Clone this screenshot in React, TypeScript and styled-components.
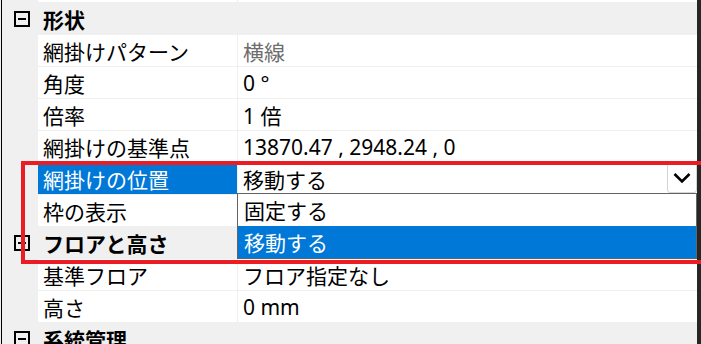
import styled, { createGlobalStyle } from "styled-components";

const GlobalStyle = createGlobalStyle`
  html, body {
    margin: 0;
    padding: 0;
    background: #f0f0f0;
  }
  body {
    font-family: "Noto Sans", "Noto Sans CJK JP", sans-serif;
  }
`;

const Page = styled.div`
  position: relative;
  width: 701px;
  height: 344px;
  overflow: hidden;
  display: flex;
  flex-direction: column;
  background: #f0f0f0;
`;

const Grid = styled.div`
  margin: -29px 0 0 1px;
  width: 696px;
  border-left: 1px solid #000;
  border-right: 4px solid #262626;
  box-sizing: border-box;
  width: 700px;
  display: flex;
  flex-direction: column;
  font-size: 21px;
  color: #000;
`;

const Row = styled.div`
  display: flex;
  height: 32px;
  flex-shrink: 0;
`;

const CatRow = styled(Row)`
  background: #f0f0f0;
  align-items: center;
  font-weight: 700;
  font-family: "Noto Sans CJK JP", sans-serif;
`;

const Gutter = styled.div`
  width: 36px;
  flex-shrink: 0;
  display: flex;
  align-items: center;
  justify-content: center;
`;

const ToggleBox = styled.span`
  width: 16px;
  height: 16px;
  box-sizing: border-box;
  border: 2px solid #000;
  display: flex;
  align-items: center;
  justify-content: center;
  margin-left: 4px;
  &::after {
    content: "";
    width: 8px;
    height: 2px;
    background: #000;
  }
`;

const CatLabel = styled.span`
  padding-left: 5px;
`;

const Cell = styled.div`
  display: flex;
  align-items: center;
  box-sizing: border-box;
  border-bottom: 1px solid #f0f0f0;
  padding-left: 5px;
  white-space: nowrap;
  font-family: "Noto Sans", "Noto Sans CJK JP", sans-serif;
`;

const NameCell = styled(Cell)<{ $active?: boolean }>`
  width: 200px;
  flex-shrink: 0;
  border-right: 1px solid #f0f0f0;
  background: ${(p) => (p.$active ? "#0078d7" : "#fff")};
  color: ${(p) => (p.$active ? "#fff" : "#000")};
  background-clip: padding-box;
`;

const ValueCell = styled(Cell)<{ $muted?: boolean }>`
  flex: 1;
  position: relative;
  background: #fff;
  color: ${(p) => (p.$muted ? "#6d6d6d" : "#000")};
`;

const DropButton = styled.div`
  position: absolute;
  top: -1px;
  right: 0;
  width: 30px;
  height: 31px;
  box-sizing: border-box;
  border: 1px solid #d4d4d4;
  border-radius: 0 0 3px 3px;
  background: #fff;
  display: flex;
  align-items: center;
  justify-content: center;
`;

const DropList = styled.div`
  position: absolute;
  top: 30px;
  left: -1px;
  right: 0;
  border: 1px solid #646464;
  background: #fff;
  z-index: 2;
`;

const Option = styled.div<{ $selected?: boolean }>`
  height: 32px;
  display: flex;
  align-items: center;
  padding-left: 6px;
  background: ${(p) => (p.$selected ? "#0078d7" : "#fff")};
  color: ${(p) => (p.$selected ? "#fff" : "#000")};
`;

const Annotation = styled.div`
  position: absolute;
  left: 21px;
  top: 161px;
  width: 700px;
  height: 103px;
  box-sizing: border-box;
  border: 4px solid #ec1c24;
  pointer-events: none;
  z-index: 3;
`;

type Item =
  | { kind: "cat"; label: string }
  | { kind: "prop"; name: string; value: string; muted?: boolean }
  | { kind: "combo"; name: string; value: string; options: string[] };

const items: Item[] = [
  { kind: "prop", name: "", value: "" },
  { kind: "cat", label: "形状" },
  { kind: "prop", name: "網掛けパターン", value: "横線", muted: true },
  { kind: "prop", name: "角度", value: "0 °" },
  { kind: "prop", name: "倍率", value: "1 倍" },
  { kind: "prop", name: "網掛けの基準点", value: "13870.47 , 2948.24 , 0" },
  { kind: "combo", name: "網掛けの位置", value: "移動する", options: ["固定する", "移動する"] },
  { kind: "prop", name: "枠の表示", value: "" },
  { kind: "cat", label: "フロアと高さ" },
  { kind: "prop", name: "基準フロア", value: "フロア指定なし" },
  { kind: "prop", name: "高さ", value: "0 mm" },
  { kind: "cat", label: "系統管理" },
];

const Chevron = () => (
  <svg width="18" height="12" viewBox="0 0 18 12">
    <polyline points="1.5,2 9,9.5 16.5,2" fill="none" stroke="#000" strokeWidth="2.6" />
  </svg>
);

const App = () => {
  return (
    <Page>
      <GlobalStyle />
      <Grid>
        {items.map((it, i) => {
          if (it.kind === "cat") {
            return (
              <CatRow key={i}>
                <Gutter>
                  <ToggleBox />
                </Gutter>
                <CatLabel>{it.label}</CatLabel>
              </CatRow>
            );
          }
          if (it.kind === "combo") {
            return (
              <Row key={i} style={{ position: "relative", zIndex: 2 }}>
                <Gutter />
                <NameCell $active>{it.name}</NameCell>
                <ValueCell>
                  {it.value}
                  <DropButton>
                    <Chevron />
                  </DropButton>
                  <DropList>
                    {it.options.map((o) => (
                      <Option key={o} $selected={o === it.value}>
                        {o}
                      </Option>
                    ))}
                  </DropList>
                </ValueCell>
              </Row>
            );
          }
          return (
            <Row key={i}>
              <Gutter />
              <NameCell>{it.name}</NameCell>
              <ValueCell $muted={it.muted}>{it.value}</ValueCell>
            </Row>
          );
        })}
      </Grid>
      <Annotation />
    </Page>
  );
};

export default App;
